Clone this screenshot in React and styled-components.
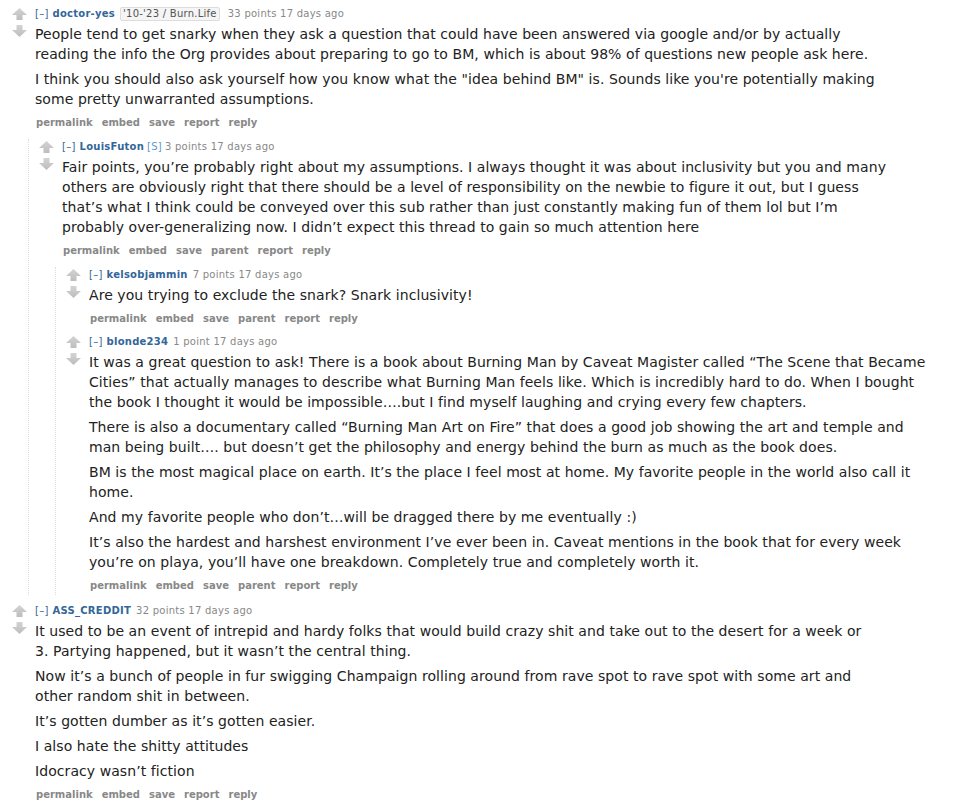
import styled, { createGlobalStyle } from "styled-components";

const GlobalStyle = createGlobalStyle`
  body {
    margin: 0;
    background: #fff;
    font-family: "DejaVu Sans", Verdana, sans-serif;
  }
`;

const Page = styled.div`
  padding: 6px 0 0 12px;
`;

const Comment = styled.div`
  margin-top: ${(p) => (p.$first ? "0" : p.$top ? "8px" : "6px")};
`;

const Row = styled.div`
  display: flex;
`;

const Midcol = styled.div`
  flex: 0 0 23px;
  display: flex;
  flex-direction: column;
  gap: 5px;
  padding-top: 2px;
`;

const Entry = styled.div`
  flex: 1;
  min-width: 0;
`;

const Tagline = styled.div`
  font-size: 10px;
  line-height: 15px;
  letter-spacing: 0.25px;
  color: #888;
  white-space: nowrap;
`;

const Expand = styled.span`
  color: #369;
  margin-right: 4px;
`;

const Author = styled.span`
  color: #369;
  font-weight: bold;
  margin-right: 5px;
`;

const Flair = styled.span`
  display: inline-block;
  background: #f5f5f5;
  border: 1px solid #ddd;
  color: #545454;
  padding: 0 2px;
  line-height: 12px;
  margin-right: 8px;
  border-radius: 2px;
`;

const Submitter = styled.span`
  color: #5f99cf;
  margin-left: -2px;
  margin-right: 3px;
`;

const Body = styled.div`
  max-width: 840px;
  margin: 3px 0 5px;
  font-size: 14px;
  line-height: 20px;
  letter-spacing: 0.07px;
  color: #222;

  p {
    margin: 0 0 5px;
  }
  p:last-child {
    margin-bottom: 0;
  }
`;

const Buttons = styled.ul`
  display: flex;
  gap: 9px;
  list-style: none;
  margin: 0;
  padding: 1px 0 1px 1px;
  font-size: 10px;
  line-height: 16px;
  font-weight: bold;
  color: #888;
`;

const Child = styled.div`
  margin-left: 16px;
  padding-left: 10px;
  border-left: 1px dotted #ddd;
  margin-top: 7px;
`;

const Arrow = ({ down }) => (
  <svg width="15" height="12" viewBox="0 0 15 12">
    <defs>
      <linearGradient id={down ? "gd" : "gu"} x1="0" y1="0" x2="0" y2="1">
        <stop offset="0" stopColor={down ? "#bdbdbd" : "#d3d3d3"} />
        <stop offset="1" stopColor={down ? "#d3d3d3" : "#bdbdbd"} />
      </linearGradient>
    </defs>
    <polygon
      transform={down ? "rotate(180 7.5 6)" : undefined}
      points="7.5,0 15,7 10.5,7 10.5,12 4.5,12 4.5,7 0,7"
      fill={`url(#${down ? "gd" : "gu"})`}
    />
  </svg>
);

const thread = [
  {
    author: "doctor-yes",
    flair: "'10-'23 / Burn.Life",
    score: "33 points",
    buttons: ["permalink", "embed", "save", "report", "reply"],
    paras: [
      "People tend to get snarky when they ask a question that could have been answered via google and/or by actually reading the info the Org provides about preparing to go to BM, which is about 98% of questions new people ask here.",
      "I think you should also ask yourself how you know what the \"idea behind BM\" is. Sounds like you're potentially making some pretty unwarranted assumptions.",
    ],
    children: [
      {
        author: "LouisFuton",
        submitter: true,
        score: "3 points",
        buttons: ["permalink", "embed", "save", "parent", "report", "reply"],
        paras: [
          "Fair points, you’re probably right about my assumptions. I always thought it was about inclusivity but you and many others are obviously right that there should be a level of responsibility on the newbie to figure it out, but I guess that’s what I think could be conveyed over this sub rather than just constantly making fun of them lol but I’m probably over-generalizing now. I didn’t expect this thread to gain so much attention here",
        ],
        children: [
          {
            author: "kelsobjammin",
            score: "7 points",
            buttons: ["permalink", "embed", "save", "parent", "report", "reply"],
            paras: ["Are you trying to exclude the snark? Snark inclusivity!"],
          },
          {
            author: "blonde234",
            score: "1 point",
            buttons: ["permalink", "embed", "save", "parent", "report", "reply"],
            paras: [
              "It was a great question to ask! There is a book about Burning Man by Caveat Magister called “The Scene that Became Cities” that actually manages to describe what Burning Man feels like. Which is incredibly hard to do. When I bought the book I thought it would be impossible….but I find myself laughing and crying every few chapters.",
              "There is also a documentary called “Burning Man Art on Fire” that does a good job showing the art and temple and man being built…. but doesn’t get the philosophy and energy behind the burn as much as the book does.",
              "BM is the most magical place on earth. It’s the place I feel most at home. My favorite people in the world also call it home.",
              "And my favorite people who don’t…will be dragged there by me eventually :)",
              "It’s also the hardest and harshest environment I’ve ever been in. Caveat mentions in the book that for every week you’re on playa, you’ll have one breakdown. Completely true and completely worth it.",
            ],
          },
        ],
      },
    ],
  },
  {
    author: "ASS_CREDDIT",
    score: "32 points",
    buttons: ["permalink", "embed", "save", "report", "reply"],
    paras: [
      "It used to be an event of intrepid and hardy folks that would build crazy shit and take out to the desert for a week or 3. Partying happened, but it wasn’t the central thing.",
      "Now it’s a bunch of people in fur swigging Champaign rolling around from rave spot to rave spot with some art and other random shit in between.",
      "It’s gotten dumber as it’s gotten easier.",
      "I also hate the shitty attitudes",
      "Idocracy wasn’t fiction",
    ],
  },
];

function CommentItem({ c, first, top }) {
  return (
    <Comment $first={first} $top={top}>
      <Row>
        <Midcol>
          <Arrow />
          <Arrow down />
        </Midcol>
        <Entry>
          <Tagline>
            <Expand>[–]</Expand>
            <Author>{c.author}</Author>
            {c.submitter && <Submitter>[S]</Submitter>}
            {c.flair && <Flair>{c.flair}</Flair>}
            {c.score} 17 days ago
          </Tagline>
          <Body>
            {c.paras.map((p, i) => (
              <p key={i}>{p}</p>
            ))}
          </Body>
          <Buttons>
            {c.buttons.map((b) => (
              <li key={b}>{b}</li>
            ))}
          </Buttons>
        </Entry>
      </Row>
      {c.children && (
        <Child>
          {c.children.map((k, i) => (
            <CommentItem key={k.author} c={k} first={i === 0} />
          ))}
        </Child>
      )}
    </Comment>
  );
}

export default function App() {
  return (
    <>
      <GlobalStyle />
      <Page>
        {thread.map((c, i) => (
          <CommentItem key={c.author} c={c} first={i === 0} top />
        ))}
      </Page>
    </>
  );
}
